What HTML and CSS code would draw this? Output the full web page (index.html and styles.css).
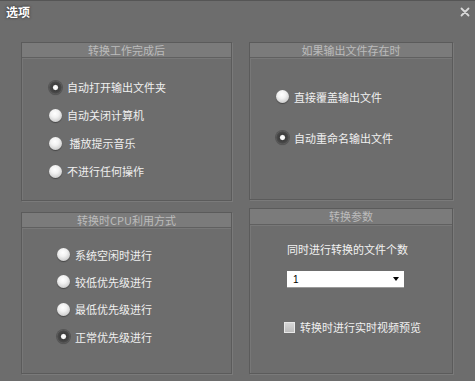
FILE: index.html
```html
<!DOCTYPE html>
<html lang="zh">
<head>
<meta charset="utf-8">
<link rel="stylesheet" href="styles.css">
</head>
<body>
<div class="window">
  <div class="titlebar">
    <span class="title">选项</span>
    <span class="close">
      <svg width="10" height="10" viewBox="0 0 10 10"><path d="M1.5 1.5 L8.5 8.5 M8.5 1.5 L1.5 8.5" stroke="#d8d8d8" stroke-width="1.8" stroke-linecap="round"/></svg>
    </span>
  </div>
  <div class="columns">
    <div class="col col-left">
      <div class="panel p-done">
        <div class="ph">转换工作完成后</div>
        <div class="pbody list-a">
          <div class="opt"><span class="radio on"></span><span>自动打开输出文件夹</span></div>
          <div class="opt"><span class="radio"></span><span>自动关闭计算机</span></div>
          <div class="opt"><span class="radio"></span><span>&nbsp;播放提示音乐</span></div>
          <div class="opt"><span class="radio"></span><span>不进行任何操作</span></div>
        </div>
      </div>
      <div class="panel p-cpu">
        <div class="ph">转换时CPU利用方式</div>
        <div class="pbody list-c">
          <div class="opt"><span class="radio"></span><span>系统空闲时进行</span></div>
          <div class="opt"><span class="radio"></span><span>较低优先级进行</span></div>
          <div class="opt"><span class="radio"></span><span>最低优先级进行</span></div>
          <div class="opt"><span class="radio on"></span><span>正常优先级进行</span></div>
        </div>
      </div>
    </div>
    <div class="col col-right">
      <div class="panel p-exist">
        <div class="ph">如果输出文件存在时</div>
        <div class="pbody list-b">
          <div class="opt"><span class="radio"></span><span>直接覆盖输出文件</span></div>
          <div class="opt"><span class="radio on"></span><span>自动重命名输出文件</span></div>
        </div>
      </div>
      <div class="panel p-param">
        <div class="ph">转换参数</div>
        <div class="pbody params">
          <div class="plabel">同时进行转换的文件个数</div>
          <div class="select"><span class="sval">1</span><span class="sarrow"></span></div>
          <div class="check-row"><span class="check"></span><span>转换时进行实时视频预览</span></div>
        </div>
      </div>
    </div>
  </div>
</div>
</body>
</html>
```
FILE: styles.css
```css
* { box-sizing: border-box; }
html, body { margin: 0; padding: 0; }
body {
  width: 475px;
  height: 381px;
  overflow: hidden;
  background: #6d6d6d;
  font-family: "Noto Sans CJK SC", "Noto Sans", sans-serif;
  font-size: 11px;
  color: #f0f0f0;
}
.window {
  width: 475px;
  height: 381px;
  background: #6d6d6d;
  border-top: 1px solid #555;
  display: flex;
  flex-direction: column;
}
.titlebar {
  height: 41px;
  display: flex;
  justify-content: space-between;
  align-items: flex-start;
  padding: 3px 6px 0 6px;
}
.title {
  font-weight: bold;
  font-size: 12px;
  line-height: 16px;
  color: #ffffff;
  text-shadow: 0 0 2px #3a3a3a, 0 0 3px #444;
}
.close {
  display: flex;
  margin-top: 3px;
  margin-right: -1px;
}
.columns {
  display: flex;
  padding-left: 21px;
  gap: 17px;
}
.col {
  display: flex;
  flex-direction: column;
}
.col-left { width: 211px; gap: 11px; }
.col-right { width: 204px; gap: 8px; }
.panel {
  border: 1px solid #5b5b5b;
  box-shadow: inset 1px 1px 0 #777, 1px 1px 0 #7a7a7a;
  display: flex;
  flex-direction: column;
}
.p-done { height: 159px; }
.p-cpu { height: 162px; }
.p-exist { height: 158px; }
.p-param { height: 166px; }
.ph {
  height: 15px;
  background: #7b7b7b;
  border-bottom: 1px solid #606060;
  box-shadow: 0 1px 0 #787878;
  color: #bcbcbc;
  text-align: center;
  font-size: 11px;
  line-height: 14px;
}
.p-param .ph { height: 16px; line-height: 15px; }
.pbody {
  display: flex;
  flex-direction: column;
}
.opt {
  display: flex;
  align-items: center;
  gap: 5px;
  height: 28px;
  line-height: 14px;
}
.list-a { padding: 15px 0 0 27px; }
.list-c { padding: 13px 0 0 35px; }
.list-c .opt { height: 27.3px; }
.list-b { padding: 18px 0 0 26px; }
.list-b .opt { height: 41px; }
.radio {
  width: 13px;
  height: 13px;
  border-radius: 50%;
  background: radial-gradient(circle at 45% 35%, #ffffff 0%, #f2f2f2 35%, #c9c9c9 80%, #a8a8a8 100%);
  box-shadow: 0 1px 1px rgba(0,0,0,0.35);
  flex: none;
  position: relative;
}
.radio.on {
  background: radial-gradient(circle at 50% 50%, #ffffff 0%, #f6f6f6 22%, #3c3c3c 34%, #4a4a4a 62%, #8a8a8a 100%);
  box-shadow: 0 0 0 1px #555, 0 1px 1px rgba(0,0,0,0.3);
}
.params {
  padding: 17px 0 0 37px;
  align-items: flex-start;
}
.plabel {
  line-height: 14px;
  color: #f2f2f2;
}
.select {
  margin-top: 15px;
  width: 117px;
  height: 17px;
  background: #ffffff;
  border-bottom: 1px solid #9a9a9a;
  display: flex;
  align-items: center;
  justify-content: space-between;
  padding: 0 5px 0 6px;
  color: #000;
  font-family: "Liberation Sans", sans-serif;
  font-size: 10px;
}
.sarrow {
  width: 0;
  height: 0;
  border-left: 3px solid transparent;
  border-right: 3px solid transparent;
  border-top: 4px solid #000;
}
.check-row {
  margin-top: 32px;
  margin-left: -3px;
  display: flex;
  align-items: center;
  gap: 5px;
  line-height: 14px;
}
.check {
  width: 11px;
  height: 11px;
  background: linear-gradient(#d6d6d6, #bdbdbd);
  border: 1px solid #e8e8e8;
  flex: none;
}
```
